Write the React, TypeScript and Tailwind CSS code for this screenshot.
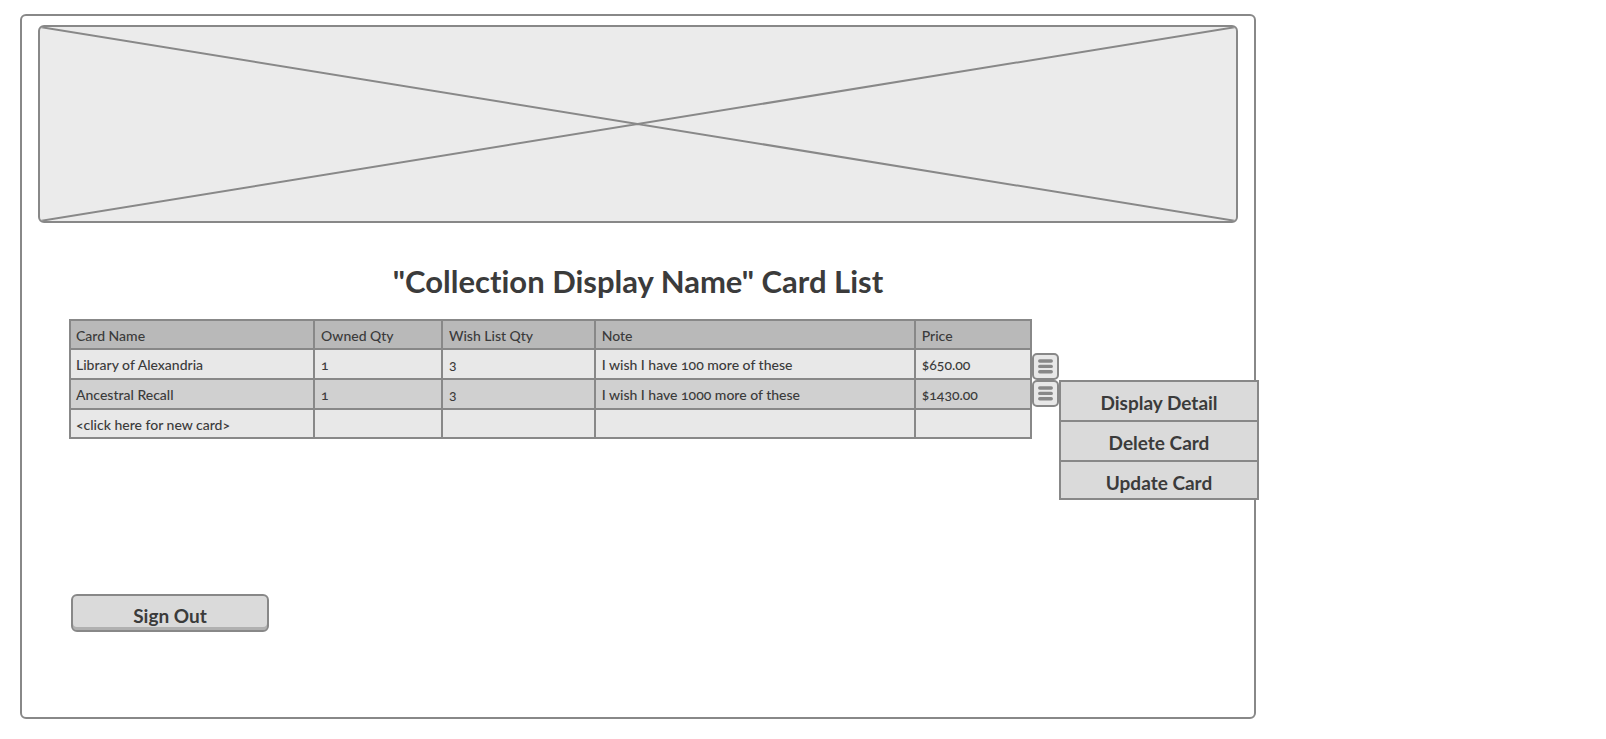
type Card = {
  name: string;
  owned: string;
  wish: string;
  note: string;
  price: string;
};

const columns = [
  { label: "Card Name", width: "w-[25.4%]" },
  { label: "Owned Qty", width: "w-[13.3%]" },
  { label: "Wish List Qty", width: "w-[15.9%]" },
  { label: "Note", width: "w-[33.3%]" },
  { label: "Price", width: "w-[12.1%]" },
];

const cards: Card[] = [
  { name: "Library of Alexandria", owned: "1", wish: "3", note: "I wish I have 100 more of these", price: "$650.00" },
  { name: "Ancestral Recall", owned: "1", wish: "3", note: "I wish I have 1000 more of these", price: "$1430.00" },
  { name: "<click here for new card>", owned: "", wish: "", note: "", price: "" },
];

const menuItems = ["Display Detail", "Delete Card", "Update Card"];

const cellClass =
  "border-2 border-[#888] px-[6px] pt-[6px] pb-0 text-left align-top font-medium first:pl-[5px]";

function Banner() {
  return (
    <div className="mx-4 mt-[9px] h-[198px] overflow-hidden rounded-md border-2 border-[#888] bg-[#ebebeb]">
      <svg className="block h-full w-full" viewBox="0 0 100 100" preserveAspectRatio="none" aria-hidden="true">
        <path d="M0 0L100 100M100 0L0 100" stroke="#888" strokeWidth="2" vectorEffect="non-scaling-stroke" />
      </svg>
    </div>
  );
}

function CardTable() {
  return (
    <table className="min-w-0 flex-1 table-fixed border-collapse text-[14px] leading-[18px] oldstyle-nums">
      <thead>
        <tr className="h-[29px] bg-[#b9b9b9]">
          {columns.map((column) => (
            <th key={column.label} scope="col" className={`${cellClass} ${column.width}`}>
              {column.label}
            </th>
          ))}
        </tr>
      </thead>
      <tbody>
        {cards.map((card) => (
          <tr key={card.name} className="h-[30px] bg-[#e8e8e8] last:h-[29px] even:bg-[#d0d0d0]">
            <td className={cellClass}>{card.name}</td>
            <td className={cellClass}>{card.owned}</td>
            <td className={cellClass}>{card.wish}</td>
            <td className={cellClass}>{card.note}</td>
            <td className={cellClass}>{card.price}</td>
          </tr>
        ))}
      </tbody>
    </table>
  );
}

function MenuButton({ label }: { label: string }) {
  return (
    <button
      type="button"
      aria-label={label}
      className="flex h-[27px] w-[27px] items-center justify-center rounded-[5px] border-2 border-[#888] bg-[#e8e8e8]"
    >
      <svg width="15" height="15" viewBox="0 0 15 15" aria-hidden="true">
        <path d="M1.75 2H13.25M1.75 7.4H13.25M1.75 12.8H13.25" stroke="#888" strokeWidth="3.4" strokeLinecap="round" />
      </svg>
    </button>
  );
}

function RowActions() {
  return (
    <div className="flex flex-col pt-[34px]">
      <MenuButton label="Library of Alexandria menu" />
      <div className="relative">
        <MenuButton label="Ancestral Recall menu" />
        <div className="absolute top-0 left-full flex w-[200px] flex-col border-2 border-[#888] bg-[#dadada]">
          {menuItems.map((item) => (
            <button
              key={item}
              type="button"
              className="flex h-10 items-start justify-center border-b-2 border-[#888] pt-[9px] text-[19px] leading-6 font-bold last:h-9 last:border-b-0"
            >
              {item}
            </button>
          ))}
        </div>
      </div>
    </div>
  );
}

export default function App() {
  return (
    <div className="min-h-screen bg-white pt-[14px] pr-[350px] pb-5 pl-5 font-['Lato',sans-serif] text-[#3b3b3b]">
      <main className="flex flex-col rounded-md border-2 border-[#888] pb-[85px] [font-variant-ligatures:no-common-ligatures]">
        <Banner />
        <h1 className="mt-[38px] text-center text-[31px] leading-10 font-bold">"Collection Display Name" Card List</h1>
        <div className="mt-[18px] flex items-start pr-[195px] pl-[47px]">
          <CardTable />
          <RowActions />
        </div>
        <button
          type="button"
          className="mt-[155px] ml-[49px] h-[38px] w-[198px] rounded-md border-2 border-[#888] bg-[#dadada] pt-[5px] text-[19px] leading-6 font-bold shadow-[inset_0_-3px_0_#b0b0b0]"
        >
          Sign Out
        </button>
      </main>
    </div>
  );
}
